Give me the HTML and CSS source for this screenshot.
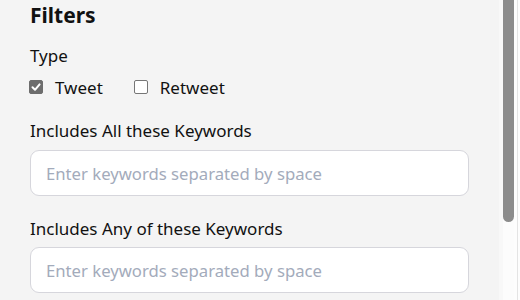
FILE: index.html
```html
<!DOCTYPE html>
<html>
<head>
<meta charset="utf-8">
<link rel="stylesheet" href="styles.css">
</head>
<body>
<div class="page">
  <div class="panel">
    <h2 class="title">Filters</h2>
    <div class="label type-label">Type</div>
    <div class="checks">
      <label class="check"><span class="box checked"><svg viewBox="0 0 14 14" width="14" height="14"><path d="M3.5 7.3 L6 9.8 L10.6 4.4" fill="none" stroke="#fff" stroke-width="2" stroke-linecap="round" stroke-linejoin="round"/></svg></span>Tweet</label>
      <label class="check"><span class="box"></span>Retweet</label>
    </div>
    <div class="label field-label">Includes All these Keywords</div>
    <div class="input"><span class="ph">Enter keywords separated by space</span></div>
    <div class="label field-label second">Includes Any of these Keywords</div>
    <div class="input"><span class="ph">Enter keywords separated by space</span></div>
  </div>
  <div class="gutter"></div>
  <div class="scrollbar"><div class="thumb"></div></div>
  <div class="edge"><div class="edge-line"></div></div>
</div>
</body>
</html>
```
FILE: styles.css
```css
html, body {
  margin: 0;
  padding: 0;
  height: 300px;
  overflow: hidden;
  background: #fcfcfc;
}
.page {
  display: flex;
  height: 300px;
  font-family: "Noto Sans", "Open Sans", sans-serif;
  color: #111;
}
.panel {
  width: 469px;
  padding-left: 30px;
  background: #f4f4f4;
  flex: none;
}
.title {
  margin: 0;
  font-size: 21px;
  font-weight: 700;
  line-height: 30px;
  height: 33px;
}
.label {
  font-size: 17px;
  line-height: 22px;
}
.type-label {
  margin-top: 12px;
}
.checks {
  display: flex;
  gap: 31px;
  margin-top: 9px;
  height: 22px;
  align-items: center;
}
.check {
  display: flex;
  align-items: center;
  font-size: 17px;
  gap: 12px;
}
.check:first-child {
  margin-left: -1px;
}
.box {
  width: 12px;
  height: 12px;
  border: 1px solid #767676;
  border-radius: 2px;
  background: #fff;
  display: flex;
  align-items: center;
  justify-content: center;
}
.box.checked {
  background: #6d6d6d;
  border-color: #6d6d6d;
}
.box svg {
  flex: none;
}
.field-label {
  margin-top: 22px;
}
.field-label.second {
  margin-top: 22px;
}
.input {
  margin-top: 7px;
  border: 1px solid #d6d6dc;
  border-radius: 9px;
  background: #fff;
  display: flex;
  align-items: center;
  padding-left: 15px;
  box-sizing: border-box;
  width: 439px;
  height: 46px;
}
.field-label + .input {
  margin-top: 8px;
}
.field-label.second + .input {
  margin-top: 7px;
}
.ph {
  font-size: 16.7px;
  color: #a3abbb;
}
.gutter {
  width: 4px;
  background: #f8f8f8;
}
.scrollbar {
  width: 11px;
  background: #fcfcfc;
}
.thumb {
  height: 222px;
  background: #8c8c8c;
  border-radius: 0 0 6px 6px;
}
.edge {
  width: 6px;
  background: #fdfdfd;
  display: flex;
  justify-content: flex-end;
}
.edge-line {
  width: 1px;
  margin-right: 2px;
  background: #e4e4e4;
  height: 100%;
}
```
